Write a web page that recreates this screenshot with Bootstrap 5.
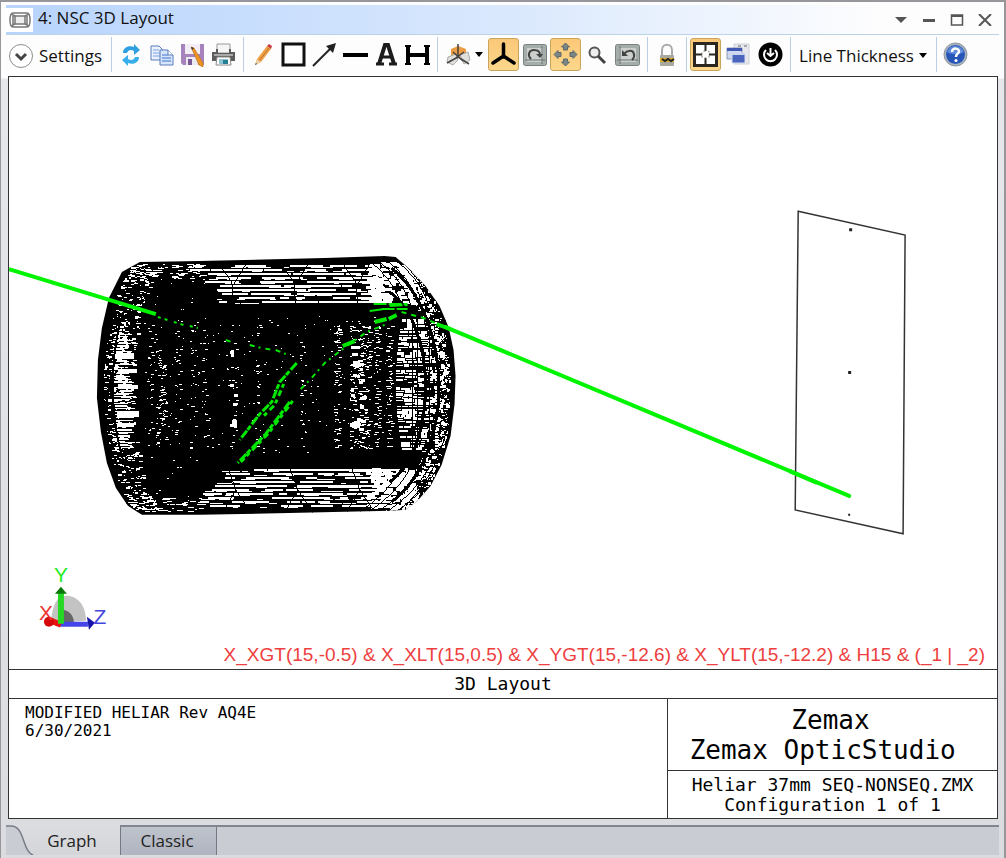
<!DOCTYPE html>
<html lang="en">
<head>
<meta charset="utf-8">
<meta name="viewport" content="width=device-width, initial-scale=1">
<title>4: NSC 3D Layout</title>
<link href="https://cdn.jsdelivr.net/npm/bootstrap@5.3.0/dist/css/bootstrap.min.css" rel="stylesheet">
<script src="https://cdn.jsdelivr.net/npm/bootstrap@5.3.0/dist/js/bootstrap.bundle.min.js"></script>
<style>
  body { font-family: "Open Sans", "Noto Sans", sans-serif; font-size: 17px; line-height: 24px; color: #111; background: #dcdee2; }
  svg { display: block; flex: none; }
  .win { border: solid #97979b; border-width: 2px 2px 0 1px; padding: 3px 5px 3px 5px; background: linear-gradient(#fdfdfd 0, #fdfdfd 76px, #e6e7ea 77px, #dadce0 100%); }
  .titlebar { height: 30px; background: linear-gradient(90deg, #b8d4fd, #d9e8fd 50%, #fdfdfe 88%); border-bottom: 1px solid #bcd2e6; }
  .titlebar button, .tools button { border: 0; background: none; padding: 0; color: inherit; display: flex; align-items: center; justify-content: center; }
  .titlebar button { width: 28px; height: 26px; color: #555; }
  .titlebar .app-title { padding-left: 5px; margin-bottom: 4px; }
  .app-icon { width: 27px; height: 24px; background: #fff; }
  .tools { height: 41px; padding: 3px 0 5px 2px; }
  .tools button { width: 31px; height: 33px; flex: none; }
  .tools .settings { width: 99px; justify-content: start; gap: 5px; padding-top: 2px; white-space: nowrap; }
  .tools .axes { width: 47px; gap: 4px; }
  .tools .shots { width: 34px; }
  .tools .thick { width: 138px; gap: 5px; padding-top: 2px; white-space: nowrap; }
  .tools button.active { background: linear-gradient(#fbc877, #fdd78b); border: 1px solid #c9a55c; border-radius: 3px; }
  .split { width: 1px; height: 35px; margin: 0 3px 0 4px; background: #bccfe2; flex: none; }
  .sheet { margin: 0 1px 0 2px; border: 1px solid #333; background: #fff; color: #000; }
  .mono { font-family: "DejaVu Sans Mono", "Liberation Mono", monospace; }
  .plot { min-height: 300px; }
  .plot svg { width: 100%; height: 100%; }
  .filter-text { right: 12px; bottom: 0; font: 19px/28px "Liberation Sans", sans-serif; color: #ee4040; white-space: nowrap; }
  .caption-row { font-size: 18px; line-height: 28px; border-top: 1px solid #333; border-bottom: 1px solid #333; box-sizing: content-box; height: 28px; }
  .info { height: 119px; }
  .notes { font-size: 16px; line-height: 18px; padding: 5px 16px; }
  .maker { width: 33.4%; border-left: 1px solid #333; }
  .maker-name { height: 72px; font-size: 26px; line-height: 30px; padding: 6px 4px 0 0; border-bottom: 1px solid #333; }
  .maker-file { font-size: 18px; line-height: 20px; padding-top: 4px; }
  .sheet-tabs { height: 30px; margin-top: 6px; border-top: 2px solid #82858f; background: #c9ccd2; }
  .sheet-tabs button { border: 0; padding: 0; color: #222; line-height: 26px; height: 28px; }
  .sheet-tabs .graph { width: 114px; margin-top: -2px; height: 30px; background: linear-gradient(#dcdde0, #d3d5d9); padding: 2px 0 0 18px; position: relative; }
  .sheet-tabs .graph svg { position: absolute; left: 0; top: 0; }
  .sheet-tabs .classic { width: 97px; padding-right: 3px; background: linear-gradient(#bfc3cc, #afb4c0); border: solid #747985; border-width: 0 1px; }
</style>
</head>
<body>
<div class="win vh-100 d-flex flex-column">
  <header class="titlebar d-flex align-items-center">
    <span class="app-icon d-flex align-items-center justify-content-center">
      <svg width="22" height="18" viewBox="0 0 22 18" fill="none" stroke="#777" stroke-width="1.5"><path d="M4 2h14c2 0 3 2 3 7s-1 7-3 7H4c-2 0-3-2-3-7s1-7 3-7z"/><path d="M6 5h10v8H6z" fill="#eee"/><path d="M2 3l4 2M20 3l-4 2M2 15l4-2M20 15l-4-2M4 4v10M18 4v10"/></svg>
    </span>
    <span class="app-title me-auto">4: NSC 3D Layout</span>
    <button type="button" aria-label="Window menu"><svg width="14" height="8" viewBox="0 0 14 8"><path d="M1 1h12L7 7z" fill="#555"/></svg></button>
    <button type="button" aria-label="Minimize"><svg width="12" height="8" viewBox="0 0 12 8"><path d="M0 3h12v3H0z" fill="#555"/></svg></button>
    <button type="button" aria-label="Maximize"><svg width="14" height="12" viewBox="0 0 14 12" fill="none" stroke="#555"><path d="M1.500 1h11v10h-11z" stroke-width="1.500"/><path d="M1 2h12" stroke-width="2"/></svg></button>
    <button type="button" aria-label="Close"><svg width="14" height="12" viewBox="0 0 14 12"><path d="M1 0l12 12M13 0L1 12" stroke="#555" stroke-width="2"/></svg></button>
  </header>

  <div class="tools d-flex align-items-center" role="toolbar" aria-label="Layout tools">
    <button type="button" class="settings"><svg width="26" height="26" viewBox="0 0 26 26" fill="none"><circle cx="13" cy="13" r="11.500" fill="#fff" stroke="#8d8d8d"/><path d="M8 11l5 5 5-5" stroke="#444" stroke-width="3"/></svg>Settings</button>
    <span class="split"></span>
    <button type="button" aria-label="Refresh"><svg width="20" height="24" viewBox="0 0 20 24" fill="#2d9ee0"><path d="M2 10C2 4 8 2 13 4V1l6 6-6 5V8c-3-2-6-1-7 2z"/><path d="M18 14c0 6-6 8-11 6v3l-6-6 6-5v4c3 2 6 1 7-2z" fill="#38aeea"/></svg></button>
    <button type="button" aria-label="Copy"><svg width="24" height="22" viewBox="0 0 24 22" stroke="#5a7cbb"><path d="M1 2h8l4 4v10H1z" fill="#e9f1fd"/><path d="M3 6h6M3 9h7M3 12h7" stroke="#7fa4e0"/><path d="M10 6h8l5 5v10H10z" fill="#d6e5fc"/><path d="M12 11h6M12 14h9M12 17h9" stroke="#3f72cc"/><path d="M18 6v5h5" fill="#fff"/></svg></button>
    <button type="button" aria-label="Save"><svg width="25" height="25" viewBox="0 0 25 25"><path d="M1 2h23v21H3l-2-2z" fill="#a783bd"/><path d="M5 2h15v10H5z" fill="#f3eef6"/><path d="M6 15h12v8H6z" fill="#eceaf0"/><path d="M8 17h4v6H8z" fill="#7a5a96"/><path d="M11 5l3 1 9 15v4l-4-2z" fill="#ee9422" stroke="#b36a18" stroke-width=".6"/><path d="M11 5l3 1-2 2z" fill="#333"/></svg></button>
    <button type="button" aria-label="Print"><svg width="25" height="24" viewBox="0 0 25 24"><path d="M6 1h13v9H6z" fill="#f5f5f5" stroke="#999"/><path d="M1 9h4V6h2v4h11V6h2v3h4v9H1z" fill="#5c5c5c"/><path d="M3 12h19" stroke="#aaa" stroke-width="2"/><path d="M6 14h13l1 8H5z" fill="#fff" stroke="#888"/><path d="M8 16h9v5H8z" fill="#8fc2cf"/><path d="M12 17h5v4h-5z" fill="#277f96"/></svg></button>
    <span class="split"></span>
    <button type="button" aria-label="Annotate"><svg width="20" height="22" viewBox="0 0 20 22"><path d="M4 15L14 2l4 3L8 18l-6 3z" fill="#f0a044"/><path d="M6 17L16 4" stroke="#bd722c"/><path d="M14 2l2-2 3 2-1 3z" fill="#c73d40"/><path d="M4 15l4 3-6 3z" fill="#ead0a6"/><path d="M3 19l1 1-2 1z" fill="#333"/></svg></button>
    <button type="button" aria-label="Rectangle"><svg width="25" height="25" viewBox="0 0 25 25"><path d="M2 2h21v21H2z" fill="#fff" stroke="#111" stroke-width="3"/></svg></button>
    <button type="button" aria-label="Arrow"><svg width="25" height="25" viewBox="0 0 25 25"><path d="M1 24L19 6" stroke="#222" stroke-width="2"/><path d="M24 1l-3 10-7-7z" fill="#222"/></svg></button>
    <button type="button" aria-label="Line"><svg width="25" height="6" viewBox="0 0 25 6"><path d="M0 1h25v4H0z"/></svg></button>
    <button type="button" aria-label="Text"><svg width="23" height="23" viewBox="0 0 23 23" fill="none" stroke="#1c1c1c"><path d="M4 21L10 2h3l6 19" stroke-width="4"/><path d="M7 14h9" stroke-width="3"/><path d="M1 21h8M14 21h8" stroke-width="3"/><path d="M9 2h5" stroke-width="3"/></svg></button>
    <button type="button" aria-label="Dimension"><svg width="25" height="20" viewBox="0 0 25 20"><path d="M0 0h6v2H5v6h15V2h-1V0h6v2h-1v16h1v2h-6v-2h1v-6H5v6h1v2H0v-2h1V2H0z"/></svg></button>
    <span class="split"></span>
    <button type="button" class="axes" aria-label="View orientation"><svg width="25" height="24" viewBox="0 0 25 24"><path d="M5 6l7-3 8 3v8H5z" fill="#eb9b42"/><path d="M2 14l8-3 2 6-5 5-6-3zM14 12l8-3 2 8-6 4z" fill="#e1dfdc" stroke="#aaa"/><path d="M12 1v13l11 7M12 14L1 20M7 9l10 9M18 9L7 17" stroke="#444" stroke-width="1.500" fill="none"/></svg><svg width="8" height="5" viewBox="0 0 8 5"><path d="M0 0h8L4 5z"/></svg></button>
    <button type="button" class="active" aria-label="Show axes"><svg width="27" height="25" viewBox="0 0 27 25"><path d="M13.500 2v13M13.500 14L3 21M13.500 14L24 21" stroke="#000" stroke-width="3.500" stroke-linecap="round"/></svg></button>
    <button type="button" aria-label="Rotate"><svg width="24" height="22" viewBox="0 0 24 22"><rect x=".5" y=".5" width="23" height="21" rx="2" fill="#a5adaa" stroke="#78817f"/><path d="M4 4h16v14H4z" fill="#cbd0cd"/><path d="M2 16h20M19 2v18" stroke="#68706e"/><path d="M8 15c-4-4-2-9 3-9 4 0 6 2 6 5" fill="none" stroke="#444" stroke-width="2"/><path d="M13 10h7l-3 4z" fill="#444"/></svg></button>
    <button type="button" class="active" aria-label="Pan"><svg width="25" height="25" viewBox="0 0 25 25" fill="#7b8787" stroke="#5f6969"><path id="pan" d="M12.500 1l4 4h-2v3h-4V5h-2z"/><use href="#pan" transform="rotate(90 12.500 12.500)"/><use href="#pan" transform="rotate(180 12.500 12.500)"/><use href="#pan" transform="rotate(270 12.500 12.500)"/></svg></button>
    <button type="button" aria-label="Zoom"><svg width="20" height="20" viewBox="0 0 20 20"><circle cx="7.500" cy="7.500" r="5" fill="#eee" stroke="#555" stroke-width="2"/><path d="M11 11l7 7" stroke="#444" stroke-width="3"/></svg></button>
    <button type="button" aria-label="Reset view"><svg width="25" height="22" viewBox="0 0 25 22"><rect x=".5" y=".5" width="24" height="21" rx="2" fill="#a5adaa" stroke="#78817f"/><path d="M4 4h17v14H4z" fill="#cbd0cd"/><path d="M2 16h21M5 2v18" stroke="#68706e"/><path d="M17 16c4-4 2-10-3-9-3 0-4 2-5 3" fill="none" stroke="#444" stroke-width="2"/><path d="M7 6v6h6z" fill="#444"/></svg></button>
    <span class="split"></span>
    <button type="button" aria-label="Lock"><svg width="16" height="24" viewBox="0 0 16 24"><path d="M3 13V7c0-7 10-7 10 0v6" fill="none" stroke="#aaa" stroke-width="2"/><rect x="1" y="12" width="14" height="11" rx="1" fill="#a9a99f"/><path d="M1 15h14v4H1z" fill="#d8ac2c"/><path d="M3 16l3 2 3-2 3 2 3-2" stroke="#222" stroke-width="2" fill="none"/></svg></button>
    <span class="split"></span>
    <button type="button" class="active" aria-label="Fit window"><svg width="25" height="25" viewBox="0 0 25 25"><path d="M1.500 1.500h22v22h-22z" fill="#fff" stroke="#2b2620" stroke-width="3"/><path d="M12.500 3v6M12.500 16v6M3 12.500h6M16 12.500h6" stroke="#2b2620" stroke-width="2"/><path d="M9 12.500V9h7v7H9z" fill="none" stroke="#777" stroke-dasharray="2 3"/></svg></button>
    <button type="button" class="shots" aria-label="Windows"><svg width="24" height="24" viewBox="0 0 24 24"><path d="M8 1h15v20H8z" fill="#e6e8ec" stroke="#ccd0d6"/><path d="M12 3h3M18 3h3" stroke="#667"/><path d="M1 5h15v11H1z" fill="#ced8ef" stroke="#8b98b6"/><path d="M1 5h15v3H1z" fill="#4258b2"/><path d="M6 10h13v10H6z" fill="#4c66bd" stroke="#d5ddf0"/><path d="M6 11h13" stroke="#cbd6ee" stroke-width="2"/></svg></button>
    <button type="button" aria-label="Reset"><svg width="25" height="25" viewBox="0 0 25 25"><circle cx="12.500" cy="12.500" r="12"/><path d="M8 8a6.500 6.500 0 1 0 9 0M12.500 6v8M9 11l3.500 3 3.500-3" fill="none" stroke="#fff" stroke-width="2"/></svg></button>
    <span class="split"></span>
    <button type="button" class="thick">Line Thickness<svg width="8" height="5" viewBox="0 0 8 5"><path d="M0 0h8L4 5z"/></svg></button>
    <span class="split"></span>
    <button type="button" aria-label="Help"><svg width="25" height="25" viewBox="0 0 25 25"><circle cx="12.500" cy="12.500" r="11.500" fill="#aab4be" stroke="#8c96a0"/><circle cx="12.500" cy="12.500" r="9.500" fill="#2856b8"/><path d="M4 10a9 9 0 0 1 17 0c-5 3-12 3-17 0z" fill="#5f8bdc"/><path d="M9 10c0-5 8-4 7 0-1 2-3 2-3 5" fill="none" stroke="#fff" stroke-width="2.500"/><circle cx="13" cy="18.500" r="1.500" fill="#fff"/></svg></button>
  </div>

  <main class="sheet flex-grow-1 d-flex flex-column">
    <div class="plot flex-grow-1 position-relative overflow-hidden">
      <svg class="position-absolute" viewBox="9 77 989 592" role="img" aria-label="Wireframe lens barrel with a traced ray reaching the detector">
        <clipPath id="barrelClip"><use href="#barrel"/></clipPath>
        <path id="barrel" d="M140 262L200 261 325 258 385 256 396 257 412 271 426 286 440 306 449 327 454 350 456 376 455 404 451 436 442 465 431 486 418 501 406 510 390 511 300 513 200 515 142 515 128 506 116 488 107 463 101 432 97 398 98 360 102 328 109 298 122 272z"/>
        <g id="lens" fill="none" shape-rendering="crispEdges" clip-path="url(#barrelClip)"></g>
        <g fill="none" stroke="#00e800">
          <path d="M9 269L156 314" stroke="#00f400" stroke-width="4"/>
          <path d="M158 317l10 3M174 322l10 3M190 326l8 2" stroke-width="2" stroke-dasharray="3 4"/>
          <path d="M226 340l6 2M250 345l12 3 12 2M276 350l10 4M301 389l10-10 14-16 22-17 20-14 20-8" stroke-width="2" stroke-dasharray="5 4 2 5"/>
          <path d="M297 363L280 382 272 402 260 414 240 440M290 402L266 434 238 463" stroke-width="3" stroke-dasharray="9 2 5 1"/>
          <path d="M293 401L269 433 241 462M284 384L275 405 263 417" stroke-width="3" stroke-dasharray="4 3 6 4"/>
          <path d="M343 346l12-5M375 322l12-3M389 319l8-4" stroke-width="4"/>
          <path d="M374 304h34M382 309h26M370 311l14-2M390 306l18-1" stroke-width="2" stroke-dasharray="13 2"/>
          <path d="M402 312l22 6 16 7" stroke-width="2" stroke-dasharray="5 5"/>
          <path d="M437 324L451 329" stroke-width="4"/>
        </g>
        <path d="M446 327L850 496" stroke="#00f400" stroke-width="4" stroke-linecap="round"/>
        <path d="M799 211L906 235 904 534 796 510z" fill="none" stroke="#333" stroke-width="1.500"/>
        <path d="M790 471L818 483" stroke="#00f400" stroke-width="4"/>
        <path d="M850 228h3v3h-3zM849 371h3v3h-3zM849 514h2v2h-2z" fill="#222"/>
        <path d="M51 623c1-17 6-27 15-27 12 0 20 10 20 25z" fill="#c3c3c3"/>
        <path d="M60 610c8-1 14 5 14 13H60z" fill="#666"/>
        <path d="M60 622h28v5H60z" fill="#4545e8"/><path d="M87 617l8 6-6 7z" fill="#1515aa"/>
        <path d="M61 625l-10-4" stroke="#e91010" stroke-width="6"/><circle cx="49" cy="622" r="5" fill="#d50909"/>
        <path d="M58 593h6v31h-6z" fill="#24d824"/><path d="M55 594l6-7 6 7z" fill="#087808"/>
        <g font-family="Liberation Sans, sans-serif" font-size="21" text-anchor="middle">
          <text x="61" y="582" fill="#22ee22">Y</text><text x="46" y="620" fill="#ee3333">X</text><text x="100" y="624" fill="#4444dd">Z</text>
        </g>
      </svg>
      <div class="filter-text position-absolute">X_XGT(15,-0.5) &amp; X_XLT(15,0.5) &amp; X_YGT(15,-12.6) &amp; X_YLT(15,-12.2) &amp; H15 &amp; (_1 | _2)</div>
    </div>
    <div class="caption-row mono text-center">3D Layout</div>
    <div class="info mono d-flex">
      <div class="notes flex-grow-1">MODIFIED HELIAR Rev AQ4E<br>6/30/2021</div>
      <div class="maker text-center">
        <div class="maker-name">Zemax<br>Zemax OpticStudio&nbsp;</div>
        <div class="maker-file">Heliar 37mm SEQ-NONSEQ.ZMX<br>Configuration 1 of 1</div>
      </div>
    </div>
  </main>

  <nav class="sheet-tabs d-flex" role="tablist">
    <button type="button" role="tab" aria-selected="true" class="graph"><svg width="30" height="30" viewBox="0 0 30 30"><path d="M0 1h5c14 0 11 27 23 29H0z" fill="#c9ccd2"/><path d="M0 1h5c14 0 11 25 22 29" fill="none" stroke="#777c88" stroke-width="1.500"/></svg>Graph</button>
    <button type="button" role="tab" aria-selected="false" class="classic">Classic</button>
  </nav>
</div>
<script>
  // Mesh of the lens barrel: light gaps between facet edges, then edges on top.
  const lens = document.getElementById('lens');
  let seed = 41;
  const rnd = () => (seed = (seed * 1103515245 + 12345) % 2147483648) / 2147483648;
  const ri = (a, b) => Math.floor(a + rnd() * (b - a + 1));
  function draw(d, color, width) {
    const p = document.createElementNS('http://www.w3.org/2000/svg', 'path');
    p.setAttribute('d', d); p.setAttribute('stroke', color); p.setAttribute('stroke-width', width);
    lens.append(p);
  }
  const spanOf = y => {
    const t = Math.min(1, Math.abs(y - 387) / 127), k = 1 - Math.sqrt(1 - t * t);
    return [99 + 43 * k, 454 - 60 * k];
  };
  function gaps(x0, x1, y0, y1, count, short, long, inside, thick = 1) {
    let d = '';
    for (let i = 0; i < count; i++) {
      const x = ri(x0, x1), y = ri(y0, y1), n = ri(short, long), [l, r] = spanOf(y);
      if (x < l + 3 || x + n > r - 2 || (inside && !inside(x, y))) continue;
      d += `M${x} ${y + thick / 2}h${n}`;
    }
    draw(d, '#fff', thick);
  }
  // Outer tube, upper and lower walls
  const cap = (x, y) => x > 180 + 36 * Math.min(1, Math.abs(y < 380 ? y - 262 : 514 - y) / 34);
  for (let y = 265; y < 303; y += 4) {
    gaps(180, 380, y, y, 9 + (y - 262) / 3, 8, 26, cap, 2);
    gaps(180, 380, y + 2, y + 2, 7, 5, 16, cap);
  }
  for (let y = 469; y < 509; y += 4) {
    gaps(180, 385, y, y, 9 + (510 - y) / 3, 8, 26, cap, 2);
    gaps(180, 385, y + 2, y + 2, 7, 5, 16, cap);
  }
  gaps(128, 200, 264, 278, 70, 2, 7);
  gaps(125, 200, 498, 511, 70, 2, 7);
  // Rims
  const inLeft = (x, y) => x < spanOf(y)[0] + 34;
  const inRight = (x, y) => x > spanOf(y)[1] - 24;
  gaps(99, 165, 264, 510, 850, 1, 4, inLeft);
  gaps(102, 150, 275, 500, 130, 2, 4, inLeft, 2);
  gaps(385, 455, 264, 510, 1500, 1, 4, inRight);
  gaps(385, 455, 264, 510, 620, 2, 4, inRight, 3);
  gaps(366, 412, 262, 302, 130, 4, 8, null, 3);
  gaps(366, 412, 468, 506, 130, 4, 8, null, 3);
  // Front opening
  for (let y = 333; y < 448; y += 3) gaps(113, 124, y, y + 1, 5, 4, 12, (x) => x < 128);
  for (const y of [356, 371, 387, 414, 425]) draw(`M${115 + y % 4} ${y}h${18 + y % 5}`, '#fff', y % 2 ? 4 : 6);
  // Rear opening
  for (let y = 320; y < 452; y += 3) {
    const t = Math.abs(y - 384) / 66, l = 396 + Math.round(6 * t * t), r = 433 - Math.round(10 * t * t);
    for (let x = l; x < r;) {
      const n = ri(3, 10);
      if (rnd() < .8) draw(`M${x} ${y}h${Math.min(n, r - x)}`, '#fff', ri(1, 3));
      x += n + 1;
    }
    if (rnd() < .7) draw(`M435 ${y}h${ri(2, 4)}`, '#fff', 2);
  }
  draw('M407 326h6M401 342h6M416 354h7M415 402h8M402 412h6M420 430h5', '#fff', 6);
  draw('M413 308V452M418 312V448M430 320V446', '#000', 1);
  for (let y = 330; y < 446; y += 11) draw(`M394 ${y}l36 ${ri(-4, 4)}`, '#000', 1);
  // Inner elements seen through the wall
  gaps(138, 395, 275, 500, 300, 1, 2, (x, y) => y > 315 && y < 455 || x < 205);
  gaps(158, 166, 355, 440, 60, 1, 3);
  for (const x of [147, 155, 175, 190, 202, 231, 255, 300, 334, 350, 358, 364, 374, 386]) gaps(x, x + 5, 325, 448, x > 330 ? 65 : 26, 1, x > 330 ? 4 : 3);
  gaps(350, 362, 345, 430, 22, 3, 6, null, 3);
  gaps(230, 234, 350, 430, 9, 3, 4, null, 3);
  draw('M352 425h8M232 423h5M353 364h7', '#fff', 6);
  // Facet edges
  let e = '', z = 'M446 320';
  for (let x = 232; x < 380; x += 62) {
    e += `M${x - 14} 262L${x} 282 ${x + 2} 303M${x + 16} 261L${x + 2} 284M${x - 4} 468L${x + 4} 490 ${x - 10} 514M${x + 4} 490l16 24`;
  }
  for (let x = 366; x < 412; x += 9) e += `M${x} 258Q${x + 26} 276 ${x + 36} 304M${x - 6} 512Q${x + 22} 494 ${x + 36} 468`;
  for (let y = 326, k = 0; y < 460; y += 9, k++) z += `L${Math.round(spanOf(y)[1]) - (k % 2 ? 1 : 11)} ${y}`;
  draw(e, '#000', 1);
  draw(z, '#000', 1);
  draw('M398 258C470 320 470 455 398 512', '#000', 1);
  draw('M392 268C455 320 455 455 392 502M390 292C438 325 438 450 390 482', '#000', 3);
  draw('M128 272C94 320 96 455 128 504M140 284C103 320 105 452 140 494', '#000', 2);
</script>
</body>
</html>
